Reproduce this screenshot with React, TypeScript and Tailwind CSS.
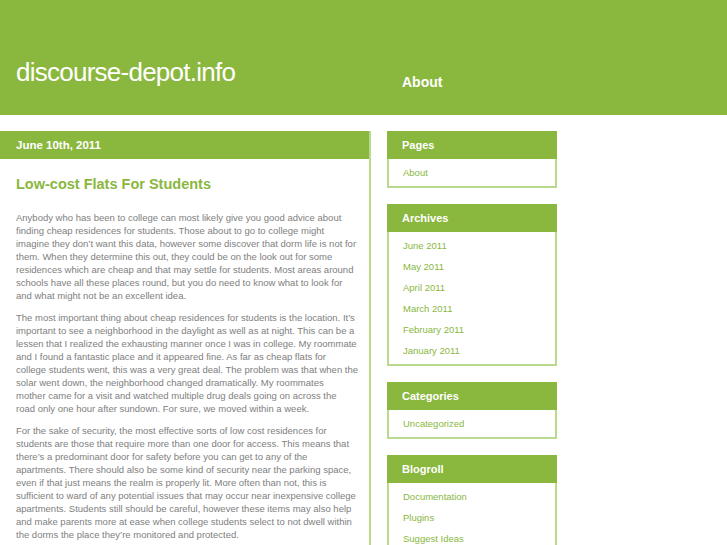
const ARCHIVES = ["June 2011", "May 2011", "April 2011", "March 2011", "February 2011", "January 2011"];
const BLOGROLL = ["Documentation", "Plugins", "Suggest Ideas", "Support Forum", "Themes"];

const PARAGRAPHS = [
  "Anybody who has been to college can most likely give you good advice about finding cheap residences for students. Those about to go to college might imagine they don\u2019t want this data, however some discover that dorm life is not for them. When they determine this out, they could be on the look out for some residences which are cheap and that may settle for students. Most areas around schools have all these places round, but you do need to know what to look for and what might not be an excellent idea.",
  "The most important thing about cheap residences for students is the location. It\u2019s important to see a neighborhood in the daylight as well as at night. This can be a lessen that I realized the exhausting manner once I was in college. My roommate and I found a fantastic place and it appeared fine. As far as cheap flats for college students went, this was a very great deal. The problem was that when the solar went down, the neighborhood changed dramatically. My roommates mother\u00a0came for a visit and watched multiple drug deals going on across the road only one hour after sundown. For sure, we moved within a week.",
  "For the sake of security, the most effective sorts of low cost residences for students are those that require more than one door for access. This means that there\u2019s a predominant door for safety before you can get to any of the apartments. There should also be some kind of security near the parking space, even if that just means the realm is properly lit. More often than not, this is sufficient to ward of any potential issues that may occur near inexpensive college apartments. Students still should be careful, however these items may also help and make parents more at ease when college students select to not dwell within the dorms the place they\u2019re monitored and protected.",
];

function Widget({ title, items }: { title: string; items: string[] }) {
  return (
    <div className="w-[170px] border-2 border-t-0 border-[#b9d98c] bg-white">
      <div className="-mx-[2px] h-[28px] bg-[#8ab73e] pl-[15px] text-[11px] font-bold leading-[28px] text-white">
        {title}
      </div>
      <ul className="pt-[3px] pb-[3px]">
        {items.map((it) => (
          <li key={it} className="h-[21px] pl-[14px] text-[9.5px] leading-[21px] text-[#8ab73e]">
            <a href="#">{it}</a>
          </li>
        ))}
      </ul>
    </div>
  );
}

export default function App() {
  return (
    <div
      className="h-[545px] w-[727px] overflow-hidden bg-white"
      style={{ fontFamily: '"Liberation Sans", Arial, sans-serif' }}
    >
      <header className="flex h-[115px] bg-[#8ab73e] text-white">
        <div className="w-[387px] pl-[16px] pt-[57px] text-[26px] leading-[30px] tracking-[-0.75px]">
          discourse-depot.info
        </div>
        <div className="pl-[15px] pt-[73px] text-[14px] font-bold leading-[18px]">About</div>
      </header>

      <div className="mt-[16px] flex gap-[16px]">
        <div className="w-[371px] border-r-2 border-[#b9d98c]">
          <div className="h-[28px] bg-[#8ab73e] pl-[16px] text-[11.5px] font-bold leading-[28px] text-white">
            June 10th, 2011
          </div>
          <div className="pl-[16px] pr-[11px]">
            <h2 className="pt-[16px] text-[14.5px] font-bold leading-[18px] text-[#8ab73e]">
              Low-cost Flats For Students
            </h2>
            <div className="mt-[18px] space-y-[9px]">
              {PARAGRAPHS.map((p, i) => (
                <p key={i} className="text-[9.5px] leading-[13px] text-[#808080]">
                  {p}
                </p>
              ))}
            </div>
          </div>
        </div>

        <div className="flex flex-col gap-[16px]">
          <Widget title="Pages" items={["About"]} />
          <Widget title="Archives" items={ARCHIVES} />
          <Widget title="Categories" items={["Uncategorized"]} />
          <Widget title="Blogroll" items={BLOGROLL} />
        </div>
      </div>
    </div>
  );
}
